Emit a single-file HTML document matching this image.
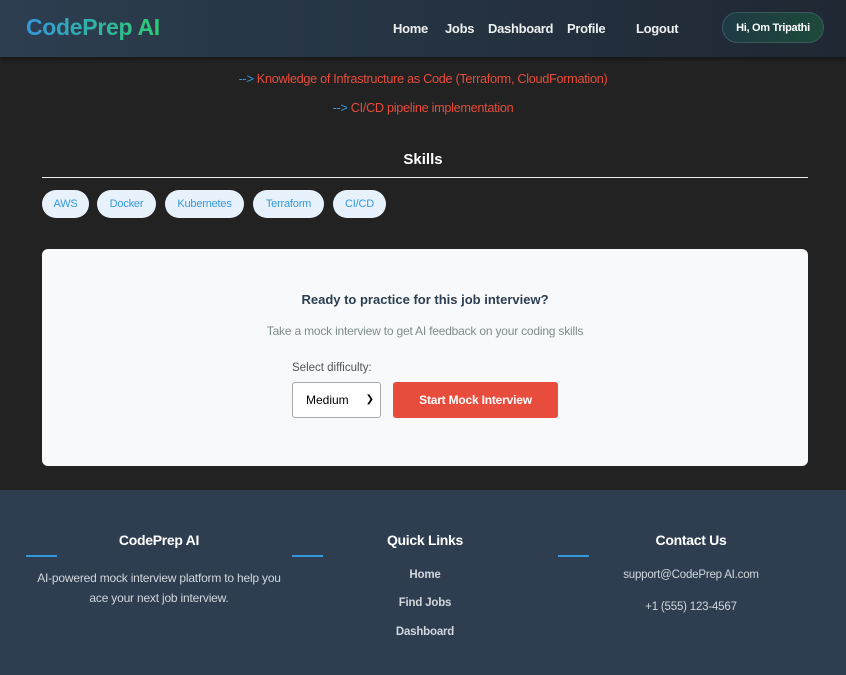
<!DOCTYPE html>
<html><head><style>
*{margin:0;padding:0;box-sizing:border-box}
body{width:846px;height:675px;overflow:hidden;background:#222;font-family:"Liberation Sans",sans-serif;position:relative}
.hdr{position:absolute;left:0;top:0;width:846px;height:57px;background:linear-gradient(90deg,#2c3e50,#1f2833);box-shadow:0 2px 4px rgba(0,0,0,.4)}
.logo{position:absolute;left:26px;top:14px;font-size:23px;font-weight:bold;background:linear-gradient(90deg,#3498db,#2ecc71);-webkit-background-clip:text;color:transparent;letter-spacing:-0.3px}
.nav{position:absolute;top:21px;font-size:13px;font-weight:bold;color:#ecf0f1;letter-spacing:-0.3px}
.hi{position:absolute;left:722px;top:12px;width:102px;height:31px;border-radius:16px;background:linear-gradient(90deg,#1e3a45,#1d4a3a);border:1px solid #3a5a5a;color:#fff;font-size:11px;font-weight:bold;text-align:center;line-height:31px;letter-spacing:-0.3px}
.ln{position:absolute;width:846px;text-align:center;font-size:12.7px;color:#e74c3c;letter-spacing:-0.3px}
.ln b{font-weight:normal;color:#3498db}
.skills{position:absolute;top:151px;width:846px;text-align:center;color:#fff;font-weight:bold;font-size:15px}
.rule{position:absolute;left:42px;top:177px;width:766px;height:1px;background:#eee}
.tag{position:absolute;top:190px;height:28px;border-radius:14px;background:#e8f2fd;color:#3498db;font-size:11px;line-height:29px;text-align:center;letter-spacing:-0.2px}
.card{position:absolute;left:42px;top:249px;width:766px;height:217px;background:#f7f9fb;border-radius:6px}
.foot{position:absolute;left:0;top:490px;width:846px;height:185px;background:#2e3e50}
.fh{position:absolute;top:42px;color:#fff;font-weight:bold;font-size:14px;text-align:center;letter-spacing:-0.3px}
.bar{position:absolute;top:65px;width:31px;height:2px;background:#3498db}
.ft{position:absolute;color:#d0d6dc;font-size:11.5px;text-align:center;letter-spacing:-0.2px}
</style></head><body>
<div class="hdr">
<div class="logo">CodePrep AI</div>
<div class="nav" style="left:393px">Home</div>
<div class="nav" style="left:445px">Jobs</div>
<div class="nav" style="left:488px">Dashboard</div>
<div class="nav" style="left:567px">Profile</div>
<div class="nav" style="left:636px">Logout</div>
<div class="hi">Hi, Om Tripathi</div>
</div>
<div class="ln" style="top:72px"><b>--&gt;</b> Knowledge of Infrastructure as Code (Terraform, CloudFormation)</div>
<div class="ln" style="top:101px"><b>--&gt;</b> CI/CD pipeline implementation</div>
<div class="skills">Skills</div>
<div class="rule"></div>
<div class="tag" style="left:42px;width:47px">AWS</div>
<div class="tag" style="left:97px;width:59px">Docker</div>
<div class="tag" style="left:165px;width:79px">Kubernetes</div>
<div class="tag" style="left:253px;width:71px">Terraform</div>
<div class="tag" style="left:333px;width:53px">CI/CD</div>
<div class="card">
<div style="position:absolute;top:43px;width:766px;text-align:center;font-weight:bold;font-size:13px;color:#2c3e50">Ready to practice for this job interview?</div>
<div style="position:absolute;top:75px;width:766px;text-align:center;font-size:12px;color:#7f8c8d;letter-spacing:-0.2px">Take a mock interview to get AI feedback on your coding skills</div>
<div style="position:absolute;left:250px;top:113px;font-size:11.5px;color:#555">Select difficulty:</div>
<div style="position:absolute;left:250px;top:133px;width:89px;height:36px;border:1px solid #aaa;border-radius:3px;background:#fff;font-size:12px;line-height:34px;padding-left:13px;color:#000">Medium<span style="position:absolute;right:6px;top:0;font-size:10px">&#10095;</span></div>
<div style="position:absolute;left:351px;top:133px;width:165px;height:36px;border-radius:3px;background:#e74c3c;color:#fff;font-weight:bold;font-size:12px;line-height:36px;text-align:center;letter-spacing:-0.2px">Start Mock Interview</div>
</div>
<div class="foot">
<div class="fh" style="left:26px;width:266px">CodePrep AI</div>
<div class="fh" style="left:292px;width:266px">Quick Links</div>
<div class="fh" style="left:558px;width:266px">Contact Us</div>
<div class="bar" style="left:26px"></div><div class="bar" style="left:292px"></div><div class="bar" style="left:558px"></div>
<div class="ft" style="left:16px;width:286px;top:78px;line-height:20px;font-size:12px">AI-powered mock interview platform to help you<br>ace your next job interview.</div>
<div class="ft" style="left:292px;width:266px;top:79px;font-weight:bold">Home</div>
<div class="ft" style="left:292px;width:266px;top:107px;font-weight:bold">Find Jobs</div>
<div class="ft" style="left:292px;width:266px;top:136px;font-weight:bold">Dashboard</div>
<div class="ft" style="left:558px;width:266px;top:79px">support@CodePrep AI.com</div>
<div class="ft" style="left:558px;width:266px;top:111px">+1 (555) 123-4567</div>
</div>
</body></html>
